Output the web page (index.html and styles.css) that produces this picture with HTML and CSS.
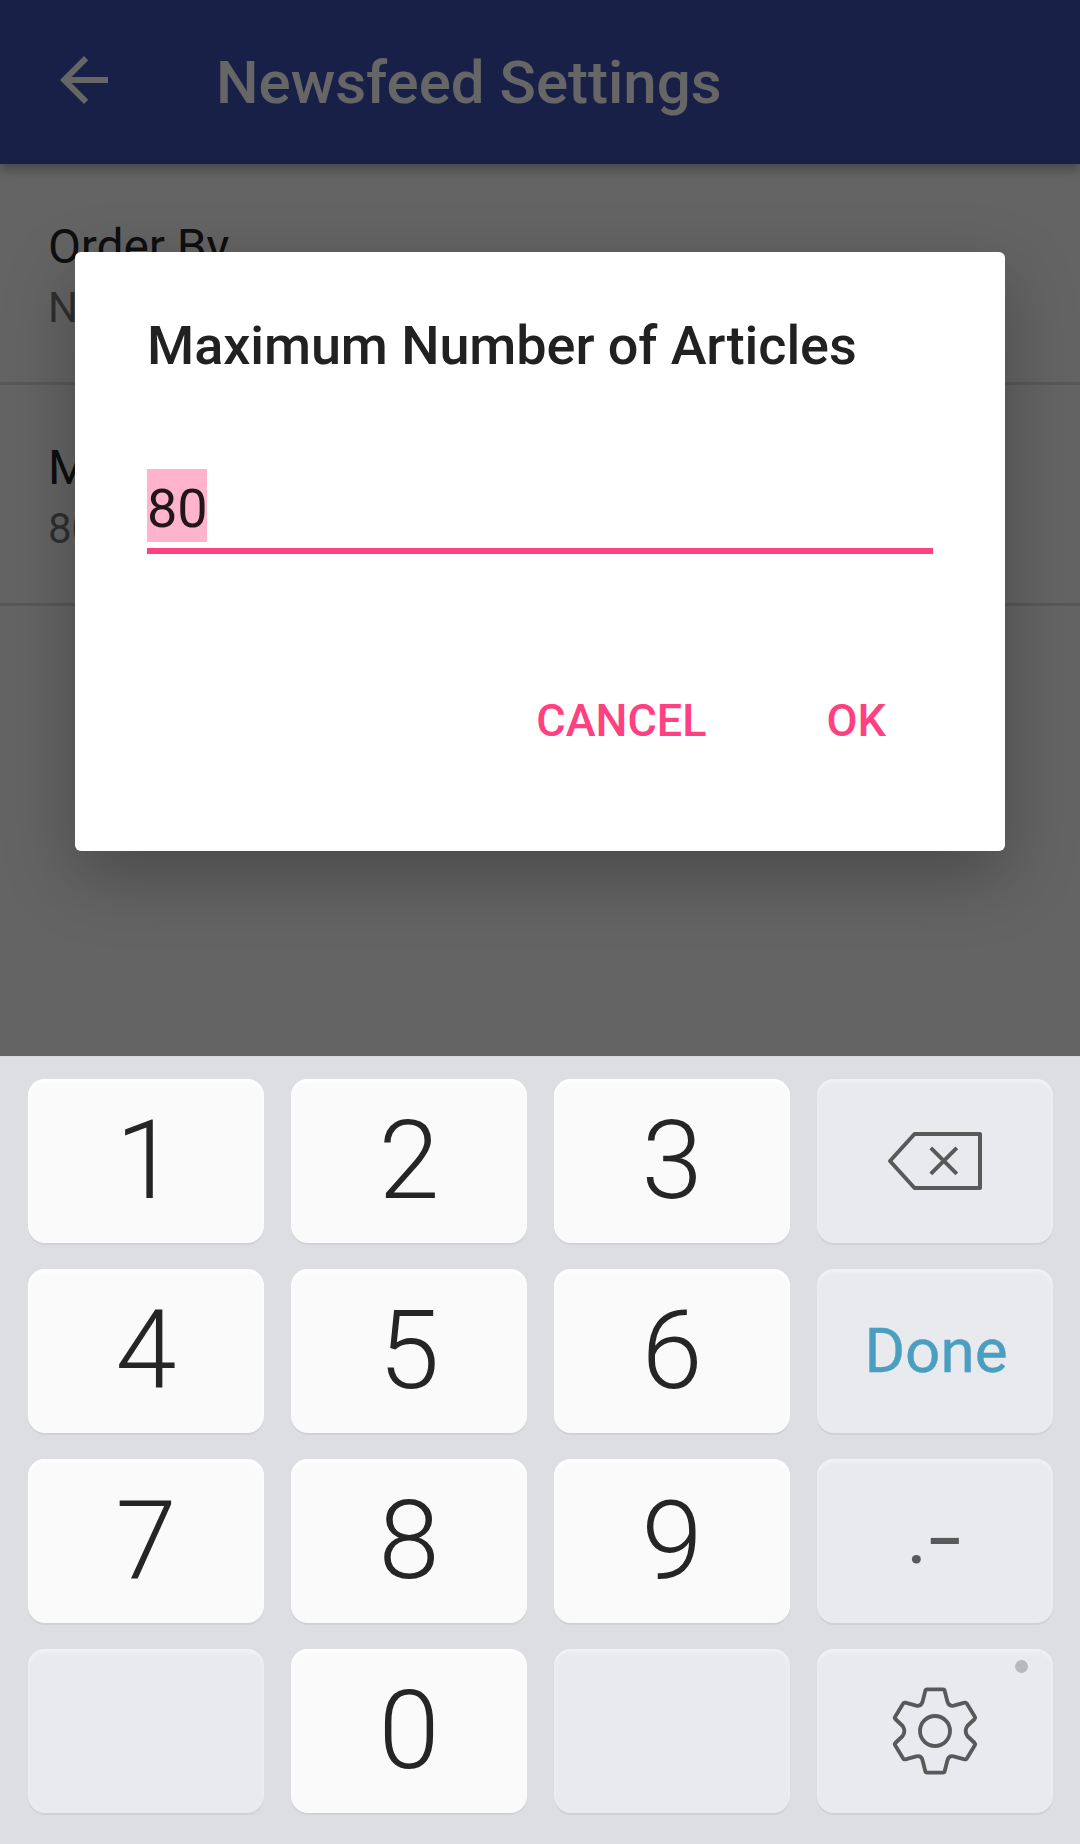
FILE: index.html
```html
<!DOCTYPE html>
<html lang="en">
<head>
<meta charset="utf-8">
<title>Newsfeed Settings</title>
<link rel="stylesheet" href="styles.css">
</head>
<body>
<div class="screen">
  <main class="app">
    <header class="toolbar">
      <svg class="back" viewBox="0 0 24 24"><path d="M20 11H7.83l5.59-5.59L12 4l-8 8 8 8 1.41-1.41L7.83 13H20v-2z"/></svg>
      <h1 class="toolbar-title">Newsfeed Settings</h1>
    </header>
    <ul class="prefs">
      <li class="pref"><div class="pref-title">Order By</div><div class="pref-summary">N</div></li>
      <li class="pref"><div class="pref-title">M</div><div class="pref-summary">80</div></li>
    </ul>
    <div class="scrim">
      <section class="dialog">
        <h2 class="dialog-title">Maximum Number of Articles</h2>
        <div class="field"><span class="selection">80</span></div>
        <div class="actions"><span class="action">CANCEL</span><span class="action">OK</span></div>
      </section>
    </div>
  </main>
  <div class="keyboard">
    <div class="key">1</div>
    <div class="key">2</div>
    <div class="key">3</div>
    <div class="key alt">
      <svg class="icon" width="100" height="64" viewBox="885 1129 100 64"><path d="M914.5 1134H980V1188H914.5L890 1161Z"/><path d="M930.8 1147.8L956.8 1173.8M956.8 1147.8L930.8 1173.8"/></svg>
    </div>
    <div class="key">4</div>
    <div class="key">5</div>
    <div class="key">6</div>
    <div class="key alt done">Done</div>
    <div class="key">7</div>
    <div class="key">8</div>
    <div class="key">9</div>
    <div class="key alt symbols"><span>.</span><span class="dash">-</span></div>
    <div class="key alt"></div>
    <div class="key">0</div>
    <div class="key alt"></div>
    <div class="key alt settings">
      <svg class="icon gear" width="90" height="90" viewBox="-135 -135 270 270"><path d="M-24-125H24Q28-125 29-121L37-89Q41-73 56-76L89-85Q93-86 95-83L120-42Q122-39 119-36L97-15Q87 0 97 15L119 36Q122 39 120 42L95 83Q93 86 89 85L56 76Q41 73 37 89L29 121Q28 125 24 125H-24Q-28 125-29 121L-37 89Q-41 73-56 76L-89 85Q-93 86-95 83L-120 42Q-122 39-119 36L-97 15Q-87 0-97-15L-119-36Q-122-39-120-42L-95-83Q-93-86-89-85L-56-76Q-41-73-37-89L-29-121Q-28-125-24-125Z"/><circle r="45"/></svg>
      <span class="badge"></span>
    </div>
  </div>
</div>
</body>
</html>
```
FILE: styles.css
```css
* { box-sizing: border-box; }

body {
  margin: 0;
  font-family: Roboto, sans-serif;
}

.screen {
  width: 1080px;
  height: 1844px;
  display: flex;
  flex-direction: column;
  overflow: hidden;
}

.app {
  position: relative;
  height: 1056px;
  overflow: hidden;
  background: #fafafa;
}

.toolbar {
  position: relative;
  display: flex;
  align-items: center;
  gap: 96px;
  height: 164px;
  padding: 0 48px 4px;
  background: #3f51b5;
  color: #fff;
  box-shadow: 0 5px 12px rgba(0, 0, 0, .32);
}

.back {
  width: 72px;
  height: 72px;
  fill: currentColor;
}

.toolbar-title {
  margin: 6px 0 0;
  font-size: 60px;
  line-height: 70px;
  font-weight: 500;
}

.prefs {
  margin: 0;
  padding: 0;
  list-style: none;
}

.pref {
  height: 221px;
  padding: 55px 48px 0;
  border-bottom: 3px solid rgba(0, 0, 0, .12);
}

.pref-title {
  font-size: 48px;
  line-height: 56px;
  letter-spacing: -.15px;
  color: rgba(0, 0, 0, .87);
}

.pref-summary {
  margin-top: 8px;
  font-size: 42px;
  line-height: 50px;
  color: rgba(0, 0, 0, .54);
}

.scrim {
  position: absolute;
  inset: 0;
  padding: 252px 75px 0;
  background: rgba(0, 0, 0, .6);
}

.dialog {
  height: 599px;
  padding: 62px 72px 0;
  border-radius: 6px;
  background: #fff;
  box-shadow: 0 24px 70px rgba(0, 0, 0, .27);
}

.dialog-title {
  margin: 0;
  font-size: 54px;
  line-height: 64px;
  font-weight: 500;
  letter-spacing: -.08px;
  color: #212121;
}

.field {
  display: flex;
  height: 85px;
  margin-top: 91px;
  border-bottom: 6px solid #ff4081;
  font-size: 54px;
  line-height: 79px;
}

.selection {
  width: 60px;
  height: 73px;
  background: #ffb3cd;
  color: #21161b;
}

.actions {
  display: flex;
  justify-content: flex-end;
  gap: 120px;
  padding: 141px 47px 0 0;
}

.action {
  font-size: 45px;
  line-height: 52px;
  font-weight: 500;
  color: #ff4081;
}

.keyboard {
  display: grid;
  grid-template-columns: repeat(4, 236px);
  grid-auto-rows: 164px;
  gap: 26px 27px;
  height: 788px;
  padding: 22px 28px 0;
  background: #dddee2;
  border-top: 1px solid #d9dadc;
}

.key {
  display: flex;
  align-items: center;
  justify-content: center;
  border-radius: 17px;
  background: #fafafa;
  box-shadow: 0 2px 0 #d1d2d6, inset 0 3px 3px #fff;
  color: #252525;
  font-size: 110px;
  line-height: 160px;
  font-weight: 300;
}

.key.alt {
  background: #e9eaee;
  box-shadow: 0 2px 0 #d0d1d4, inset 0 3px 3px #f1f2f4;
}

.icon {
  fill: none;
  stroke: #585958;
  stroke-width: 4;
  stroke-linejoin: round;
}

.gear { stroke-width: 11.5; }

.key.done {
  padding-left: 2px;
  color: #4a9ebf;
  font-size: 62px;
  font-weight: 400;
  -webkit-text-stroke: .4px #4a9ebf;
}

.key.symbols {
  gap: 8px;
  padding: 2px 7px 0 0;
  color: #585958;
  font-size: 64px;
  font-weight: 500;
}

.dash {
  display: inline-block;
  transform: translateY(-2px) scaleX(1.7);
}

.settings { position: relative; }

.badge {
  position: absolute;
  top: 11px;
  right: 25px;
  width: 13px;
  height: 13px;
  border-radius: 50%;
  background: #b8b9bb;
}
```
